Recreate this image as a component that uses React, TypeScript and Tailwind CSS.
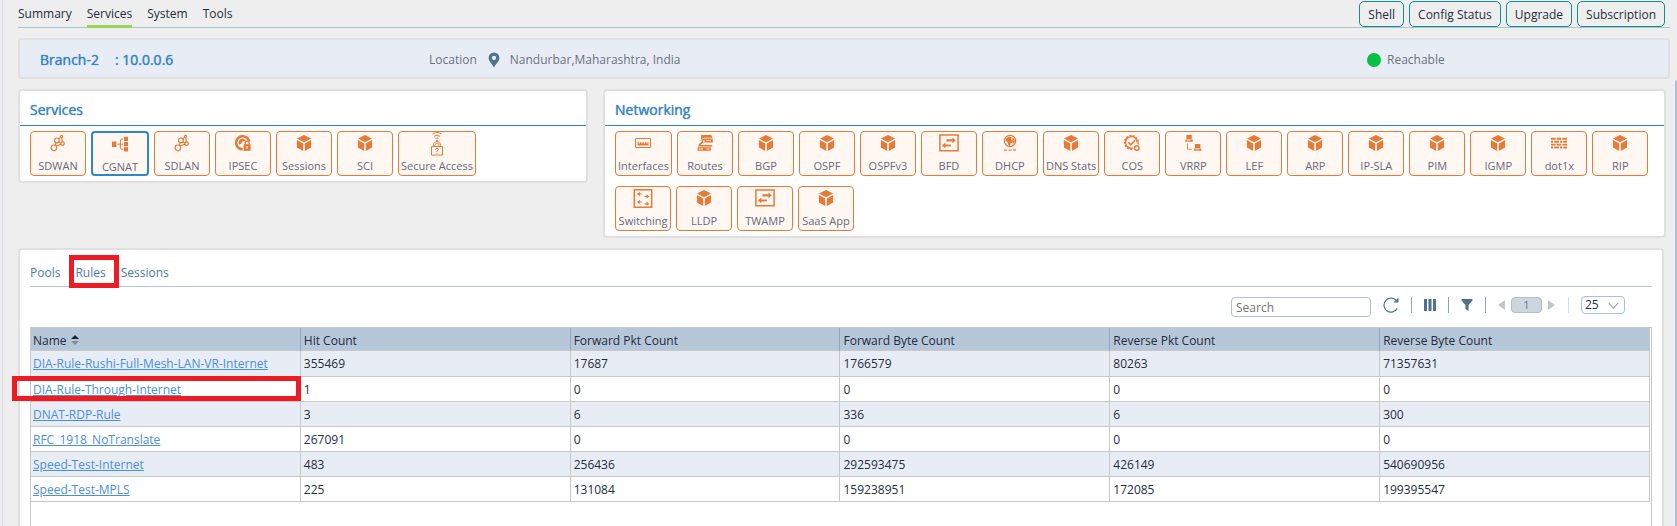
import React from "react";

type IconName =
  | "cube"
  | "sdwan"
  | "cgnat"
  | "ipsec"
  | "secure"
  | "interfaces"
  | "routes"
  | "exchange"
  | "dhcp"
  | "cos"
  | "vrrp"
  | "wall"
  | "switching";

const ORANGE = "#e87a38";

const glyphs: Record<IconName, React.ReactNode> = {
  cube: (
    <g fill={ORANGE}>
      <path d="M10 2l7 3.6-7 3.7-7-3.7z" />
      <path d="M2.9 7l6.3 3.4V18l-6.3-3.6z" />
      <path d="M17.1 7l-6.3 3.4V18l6.3-3.6z" />
    </g>
  ),
  sdwan: (
    <g fill="none" stroke={ORANGE} strokeWidth="1.2">
      <circle cx="5.9" cy="14.8" r="2.8" />
      <circle cx="8.9" cy="7.4" r="2.4" />
      <circle cx="14.6" cy="10.6" r="1.7" />
      <circle cx="13.6" cy="3.4" r="1.1" />
      <path d="M7 12.3l1.2-2.6M10.6 9l2.6 1M8 12.9l5.2-1.6M13.8 4.6l.6 4.2M10.9 6l1.8-1.9" />
    </g>
  ),
  cgnat: (
    <g fill={ORANGE}>
      <path d="M2 7.5h4.4v5.4H2zM14 2.8h4v4.3h-4zM14 8h4v4.3h-4zM14 13.2h4v4.3h-4z" />
      <path d="M7.4 10.2h3M13 5h-1q-1.6 0-1.6 2v6.4q0 2 1.6 2h1M10.4 10.2H13" fill="none" stroke={ORANGE} />
    </g>
  ),
  ipsec: (
    <g>
      <path d="M16.2 8.6A6.6 6.6 0 1 0 9.6 16.4" fill="none" stroke={ORANGE} strokeWidth="2.6" />
      <path d="M9.7 5.6a4.2 4.2 0 0 0-3.8 5.8l2.6-.8.8-2.4 3 .2.6-1.4z" fill={ORANGE} />
      <path d="M10.6 11.2h7v6.6h-7z" fill={ORANGE} />
      <path d="M12.2 11.4V10a1.9 1.9 0 0 1 3.8 0v1.4" fill="none" stroke={ORANGE} strokeWidth="1.3" />
      <path d="M14.1 13v2.8" stroke="#fff" strokeWidth="1.2" />
    </g>
  ),
  secure: (
    <g fill="none" stroke={ORANGE}>
      <path d="M5.4 1.2q4.6-3.4 9.2 0M7 3.4q3-2.4 6 0M8.6 5.4q1.4-1 2.8 0" />
      <circle cx="10" cy="7.4" r=".5" fill={ORANGE} />
      <path d="M6.4 14v-2a3.6 3.6 0 0 1 7.2 0v2M8 14v-1.8a2 2 0 0 1 4 0V14" strokeWidth=".9" />
      <path d="M4.5 13.5h11v8.6h-11z" />
      <path d="M8.6 16.6q0-1.4 1.4-1.4t1.4 1.2q0 .9-1.4 1.5v1M10 19.9v.8" />
    </g>
  ),
  interfaces: (
    <g>
      <path d="M2.5 5.5h15v9h-15z" fill="none" stroke={ORANGE} />
      <path d="M4.5 9.2H6v1.2h1V9.2h1.5v1.2h1V9.2H11v1.2h1V9.2h1.5v1.2h1V9.2h1v3.2h-11z" fill={ORANGE} />
    </g>
  ),
  routes: (
    <g fill={ORANGE}>
      <path d="M6.2 2h10l1.4 2.8H8.8L6 6.6z" />
      <path d="M4.8 7.4l3.8-2h9.2v4H8.4l2-1.8z" />
      <path d="M3.4 12l4.6-5 .4 2.4L5.6 12h11.6v1.6H3.4z" />
      <path d="M2.6 14.2h13.2v3.6H2.6z" />
      <path d="M11 7.4h5M11.4 16h3M4 16h4" stroke="#fff" strokeWidth=".8" />
    </g>
  ),
  exchange: (
    <g>
      <path d="M.9 2.1h18.2v15.6H.9z" fill="none" stroke={ORANGE} strokeWidth="1.5" />
      <path d="M7.4 6.3h6V4.4l3.4 2.9-3.4 2.9V8.4h-6zM11.8 11.4H6.4V9.6L3 12.6l3.4 2.8v-1.9h5.4z" fill={ORANGE} />
    </g>
  ),
  dhcp: (
    <g>
      <circle cx="10" cy="8" r="5.6" fill="none" stroke={ORANGE} strokeWidth="1.2" />
      <path d="M6 5.6l3-2 2.6.4-.6 2.4 2 .6-.4 2.6-2.2 1-.4 2.6L8 11.400 7.200 8.800 5.400 8zM12.600 4.400l2 2.200.2 2.600-1.400 1.800-.6-2 .6-1.400-1-1.200z" fill={ORANGE} />
      <path d="M4 17.2h3M8.6 17.2h2.8M13 17.2h3" stroke={ORANGE} strokeWidth="1.2" />
    </g>
  ),
  cos: (
    <g fill="none" stroke={ORANGE}>
      <circle cx="9.4" cy="9.4" r="6.8" strokeWidth="1.6" strokeDasharray="2.1 1.2" />
      <path d="M10.6 15.1A5.8 5.8 0 1 1 15.2 9.4" strokeWidth="1.4" />
      <path d="M6.4 9.2l2.4 2.6 4.4-4.6" strokeWidth="1.6" />
      <circle cx="14.8" cy="15" r="3.6" fill="#fff8f2" stroke="none" />
      <circle cx="14.8" cy="15" r="2.3" strokeWidth="1.4" />
    </g>
  ),
  vrrp: (
    <g fill={ORANGE}>
      <path d="M3.4 2h5.4v4H3.4zM2.4 6.6h7.4v2.2H2.4zM12 11h5.4v4H12zM11 15.6h7.4v2.2H11z" />
      <path d="M4.5 10.4v5.8H9" fill="none" stroke={ORANGE} strokeWidth=".9" />
      <path d="M4 7.7h3M12.6 16.7h3" stroke="#fff8f2" strokeWidth=".6" />
    </g>
  ),
  wall: (
    <g fill="none" stroke={ORANGE} strokeWidth="1.9">
      <path d="M2 5.8h16" strokeDasharray="4.6 1.1" />
      <path d="M2 8.7h16" strokeDasharray="2.2 1.1 4.6 1.1" />
      <path d="M2 11.6h16" strokeDasharray="4.6 1.1" />
      <path d="M2 14.5h16" strokeDasharray="2.2 1.1 4.6 1.1" />
    </g>
  ),
  switching: (
    <g>
      <path d="M1.3 1.8h17.4v17.4H1.3z" fill="none" stroke={ORANGE} strokeWidth="1.5" />
      <path
        d="M4 6l2.8-2.2v1.6h2v1.2h-2v1.6zM4 14l2.8-2.2v1.6h2v1.2h-2v1.6zM16.4 8.4l-2.8-2.2v1.6h-2V9h2v1.6zM16.4 15.8l-2.8-2.2v1.6h-2v1.2h2V18z"
        fill={ORANGE}
      />
    </g>
  ),
};

type TileData = { label: string; icon: IconName; selected?: boolean };

const services: TileData[] = [
  { label: "SDWAN", icon: "sdwan" },
  { label: "CGNAT", icon: "cgnat", selected: true },
  { label: "SDLAN", icon: "sdwan" },
  { label: "IPSEC", icon: "ipsec" },
  { label: "Sessions", icon: "cube" },
  { label: "SCI", icon: "cube" },
  { label: "Secure Access", icon: "secure" },
];

const networking: TileData[] = [
  { label: "Interfaces", icon: "interfaces" },
  { label: "Routes", icon: "routes" },
  { label: "BGP", icon: "cube" },
  { label: "OSPF", icon: "cube" },
  { label: "OSPFv3", icon: "cube" },
  { label: "BFD", icon: "exchange" },
  { label: "DHCP", icon: "dhcp" },
  { label: "DNS Stats", icon: "cube" },
  { label: "COS", icon: "cos" },
  { label: "VRRP", icon: "vrrp" },
  { label: "LEF", icon: "cube" },
  { label: "ARP", icon: "cube" },
  { label: "IP-SLA", icon: "cube" },
  { label: "PIM", icon: "cube" },
  { label: "IGMP", icon: "cube" },
  { label: "dot1x", icon: "wall" },
  { label: "RIP", icon: "cube" },
  { label: "Switching", icon: "switching" },
  { label: "LLDP", icon: "cube" },
  { label: "TWAMP", icon: "exchange" },
  { label: "SaaS App", icon: "cube" },
];

const columns = ["Name", "Hit Count", "Forward Pkt Count", "Forward Byte Count", "Reverse Pkt Count", "Reverse Byte Count"];

const rows = [
  ["DIA-Rule-Rushi-Full-Mesh-LAN-VR-Internet", "355469", "17687", "1766579", "80263", "71357631"],
  ["DIA-Rule-Through-Internet", "1", "0", "0", "0", "0"],
  ["DNAT-RDP-Rule", "3", "6", "336", "6", "300"],
  ["RFC_1918_NoTranslate", "267091", "0", "0", "0", "0"],
  ["Speed-Test-Internet", "483", "256436", "292593475", "426149", "540690956"],
  ["Speed-Test-MPLS", "225", "131084", "159238951", "172085", "199395547"],
];

function Tile({ label, icon, selected }: TileData) {
  return (
    <button
      type="button"
      className={
        "flex h-[45px] flex-col items-center rounded bg-[#fff8f2] pt-px text-[11px] leading-4 text-[#67697c] " +
        (selected ? "min-w-[58px] border-2 border-[#2f88c5] px-1" : "min-w-14 border border-[#e87a38] px-[2px]")
      }
    >
      <svg viewBox="0 0 20 20" className="mb-[5px] size-5 shrink-0 overflow-visible" aria-hidden="true">
        {glyphs[icon]}
      </svg>
      <span className="whitespace-nowrap">{label}</span>
    </button>
  );
}

function Panel({ title, tiles, className }: { title: string; tiles: TileData[]; className: string }) {
  return (
    <section className={"rounded border-2 border-[#e0e0e0] bg-white " + className}>
      <h2 className="border-b border-[#2f88c5] px-[10px] pt-[9px] pb-[5px] text-sm leading-5 font-medium text-[#3b82c4] [text-shadow:0_0_1px_currentColor]">
        {title}
      </h2>
      <div className="flex flex-wrap gap-x-[5px] gap-y-[10px] px-[10px] py-[5px]">
        {tiles.map((t) => (
          <Tile key={t.label} {...t} />
        ))}
      </div>
    </section>
  );
}

function Divider({ light }: { light?: boolean }) {
  return <span className={"h-4 w-px " + (light ? "bg-[#d3dde5]" : "bg-[#8fa5b5]")} />;
}

export default function App() {
  return (
    <div className="flex min-h-screen bg-[#eeeeee] pl-[2px] font-['Open_Sans','Noto_Sans',sans-serif] text-xs text-[#1f2d3d]">
      <div className="flex min-w-0 flex-1 flex-col border-l border-[#dcdce6] pl-[15px]">
        <header className="mr-[5px] flex h-7 justify-between border-b border-[#a9c3cf]">
          <nav className="flex gap-[15px]">
            {["Summary", "Services", "System", "Tools"].map((item) => (
              <a
                key={item}
                href="#"
                className={
                  "-mb-px h-7 border-b-[3px] pt-1 leading-5 " + (item === "Services" ? "border-[#9ad65b]" : "border-transparent")
                }
              >
                {item}
              </a>
            ))}
          </nav>
          <div className="flex gap-[5px] pt-px pr-[5px]">
            {["Shell", "Config Status", "Upgrade", "Subscription"].map((b) => (
              <button key={b} type="button" className="h-[26px] rounded-[5px] border border-[#12908a] px-2 pt-px leading-6">
                {b}
              </button>
            ))}
          </div>
        </header>

        <section className="mt-[10px] mr-[5px] flex h-[41px] items-center rounded border-2 border-[#e0e0e0] bg-[#e8edf5] pt-[2px] pl-5 text-[#6b7280]">
          <div className="flex w-[389px] gap-4 text-sm font-medium text-[#3b82c4] [text-shadow:0_0_1px_currentColor]">
            <span>Branch-2</span>
            <span>: 10.0.0.6</span>
          </div>
          <div className="flex flex-1 items-center">
            <span>Location</span>
            <svg viewBox="0 0 12 16" className="mr-[10px] ml-[11px] h-4 w-3" aria-hidden="true">
              <path d="M6 .5A5.3 5.3 0 0 0 .6 5.8C.6 9.4 3.6 11 6 15.6 8.4 11 11.4 9.4 11.4 5.8A5.3 5.3 0 0 0 6 .5zM6 3.8a2.1 2.1 0 1 1 0 4.2 2.1 2.1 0 0 1 0-4.2z" fill="#4f738f" />
            </svg>
            <span>Nandurbar,Maharashtra, India</span>
          </div>
          <div className="flex w-[301px] items-center gap-[6px]">
            <span className="size-[14px] rounded-full bg-[#04c043]" />
            <span>Reachable</span>
          </div>
        </section>

        <div className="mt-[10px] mr-[9px] flex items-start gap-[15px]">
          <Panel title="Services" tiles={services} className="w-[570px]" />
          <Panel title="Networking" tiles={networking} className="min-w-0 flex-1" />
        </div>

        <main className="mt-[10px] mr-[11px] flex flex-1 flex-col rounded-t border-2 border-b-0 border-[#e0e0e0] bg-white px-[10px]">
          <nav className="flex gap-[15px] border-b border-[#b0c8d4] pt-[13px] pb-[3px] text-[#4a7ab0]">
            {["Pools", "Rules", "Sessions"].map((tab) => (
              <a key={tab} href="#" className="relative leading-5">
                {tab}
                {tab === "Rules" && (
                  <span className="pointer-events-none absolute -top-2 -right-[13px] -bottom-[5px] -left-[6px] border-5 border-[#ed1c24]" />
                )}
              </a>
            ))}
          </nav>

          <div className="flex h-10 items-center justify-end pr-[27px] pb-[5px]">
            <input
              type="text"
              aria-label="Search"
              placeholder="Search"
              className="mt-[5px] mr-3 h-5 w-[140px] rounded border border-[#a9c3d4] bg-white px-1 leading-4 placeholder:text-[#757575]"
            />
            <button type="button" aria-label="Refresh" className="mr-3">
              <svg viewBox="0 0 16 16" className="size-4" aria-hidden="true">
                <path d="M13 3.2A7 7 0 1 0 14.2 11.4" fill="none" stroke="#4f738f" strokeWidth="1.2" />
                <path d="M15.5.6v5h-5z" fill="#4f738f" />
              </svg>
            </button>
            <Divider />
            <button type="button" aria-label="Columns" className="mx-3">
              <svg viewBox="0 0 12 12" className="size-3" aria-hidden="true">
                <path d="M0 0h3v12H0zM4.5 0h3v12h-3zM9 0h3v12H9z" fill="#4f738f" />
              </svg>
            </button>
            <Divider />
            <button type="button" aria-label="Filter" className="mx-3">
              <svg viewBox="0 0 12 12" className="size-3" aria-hidden="true">
                <path d="M.5 0h11v1.5L7.6 6v6L4.4 10V6L.5 1.5z" fill="#4f738f" />
              </svg>
            </button>
            <Divider />
            <button type="button" aria-label="Previous page" className="mr-[6px] ml-3">
              <svg viewBox="0 0 7 10" className="h-[10px] w-[7px]" aria-hidden="true">
                <path d="M7 0v10L0 5z" fill="#c2c6ca" />
              </svg>
            </button>
            <button type="button" className="h-4 w-[31px] rounded border border-[#a9c3d4] bg-[#cbd6df] text-[11px] leading-[14px] text-[#6b7280]">
              1
            </button>
            <button type="button" aria-label="Next page" className="mr-[13px] ml-[6px]">
              <svg viewBox="0 0 7 10" className="h-[10px] w-[7px]" aria-hidden="true">
                <path d="M0 0v10l7-5z" fill="#c2c6ca" />
              </svg>
            </button>
            <Divider light />
            <div className="relative ml-3">
              <select
                aria-label="Rows per page"
                defaultValue="25"
                className="block h-[18px] w-11 appearance-none rounded border border-[#a9c3d4] bg-white pl-[3px] leading-4"
              >
                <option>25</option>
                <option>50</option>
                <option>100</option>
              </select>
              <svg viewBox="0 0 12 8" className="pointer-events-none absolute top-[6px] right-[6px] h-[7px] w-[11px]" aria-hidden="true">
                <path d="M.5 1L6 7l5.5-6" fill="none" stroke="#a0a5aa" strokeWidth="1.2" />
              </svg>
            </div>
          </div>

          <div className="flex-1 border border-b-0 border-[#c8c8c8] pr-px">
            <table className="w-full table-fixed border-separate border-spacing-0">
              <thead>
                <tr className="bg-[#b6c7da]">
                  {columns.map((c, i) => (
                    <th
                      key={c}
                      className="h-[23px] border-r border-b border-r-[#93a8bd] border-b-[#c8c8c8] p-0 pt-1 pl-[3px] text-left leading-[18px] font-normal first:pl-[2px] last:border-r-[#c8c8c8]"
                    >
                      {c}
                      {i === 0 && (
                        <svg viewBox="0 0 8 10" className="mb-1 ml-1 inline h-[10px] w-2" aria-hidden="true">
                          <path d="M4 0l4 4H0z" fill="#1d2430" />
                          <path d="M4 10l4-4H0z" fill="#7f8c9b" />
                        </svg>
                      )}
                    </th>
                  ))}
                </tr>
              </thead>
              <tbody>
                {rows.map((row, r) => (
                  <tr key={row[0]} className="odd:bg-[#e8edf5]">
                    {row.map((cell, i) => (
                      <td
                        key={i}
                        className={
                          "relative border-r border-b border-[#c8c8c8] p-0 pl-[3px] leading-5 first:pl-[2px] " +
                          (r === 0 ? "h-[26px]" : "h-[25px] pt-[2px]")
                        }
                      >
                        {i === 0 ? (
                          <a href="#" className="text-[#4a90d9] underline">
                            {cell}
                          </a>
                        ) : (
                          cell
                        )}
                        {i === 0 && r === 1 && (
                          <span className="pointer-events-none absolute -top-px -right-px bottom-0 -left-[19px] z-10 border-5 border-[#ed1c24]" />
                        )}
                      </td>
                    ))}
                  </tr>
                ))}
              </tbody>
            </table>
          </div>
        </main>
      </div>
      <div className="mt-20 w-[2px] rounded-tl bg-[#a9bfd8]" />
    </div>
  );
}
